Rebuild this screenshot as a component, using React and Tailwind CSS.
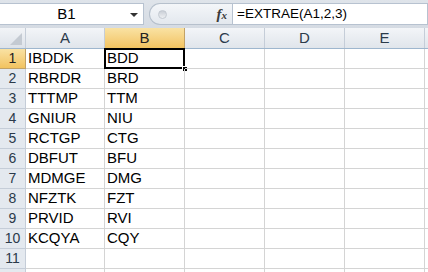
import React from 'react';

const rows = [
  ['IBDDK', 'BDD'],
  ['RBRDR', 'BRD'],
  ['TTTMP', 'TTM'],
  ['GNIUR', 'NIU'],
  ['RCTGP', 'CTG'],
  ['DBFUT', 'BFU'],
  ['MDMGE', 'DMG'],
  ['NFZTK', 'FZT'],
  ['PRVID', 'RVI'],
  ['KCQYA', 'CQY'],
  ['', ''],
  ['', ''],
];

const cols = ['A', 'B', 'C', 'D', 'E'];
const widths = ['w-[79px]', 'w-[80px]', 'w-[80px]', 'w-[80px]', 'w-[80px]'];

const App = () => {
  return (
    <div className="w-[428px] h-[272px] overflow-hidden bg-white font-['Liberation_Sans',Arial,sans-serif] text-[15px] text-black">
      {/* Formula bar */}
      <div className="h-[28px] bg-gradient-to-b from-[#dfe4ea] to-[#d5dbe3] pt-[3px] flex">
        <div className="w-[144px] h-[22px] bg-white border-y border-r border-[#b7c2d0] flex items-center relative">
          <span className="flex-1 text-center pr-[10px] text-[15px]">B1</span>
          <span className="absolute right-[5px] top-[9px] w-0 h-0 border-l-[4px] border-r-[4px] border-t-[4px] border-l-transparent border-r-transparent border-t-[#333]" />
        </div>
        <div className="ml-[5px] w-[83px] h-[22px] rounded-l-full border-y border-l border-[#b6c0cc] bg-gradient-to-b from-[#f4f6f9] to-[#e3e8ee] flex items-center">
          <span className="ml-[8px] w-[9px] h-[9px] rounded-full bg-gradient-to-b from-[#c9ced6] to-[#eef0f3] border border-[#c3c9d1]" />
          <span className="ml-auto mr-[5px] font-['Liberation_Serif',serif] italic font-bold text-[15px] text-[#3a3a3a] leading-none">
            f<span className="text-[11px]">x</span>
          </span>
        </div>
        <div className="flex-1 h-[22px] bg-white border border-[#b7c2d0] flex items-center pl-[4px] text-[13.5px]">
          =EXTRAE(A1,2,3)
        </div>
      </div>

      {/* Column headers */}
      <div className="flex h-[21px] border-b border-[#9eb6ce]">
        <div className="w-[26px] shrink-0 bg-gradient-to-b from-[#f2f4f7] to-[#dde2e9] border-r border-[#c5cdd8] relative">
          <span className="absolute right-[3px] bottom-[3px] w-0 h-0 border-b-[12px] border-l-[12px] border-b-[#c4cad2] border-l-transparent" />
        </div>
        {cols.map((c, i) => (
          <div
            key={c}
            className={`${widths[i]} shrink-0 border-r flex items-center justify-center text-[15px] ${
              c === 'B'
                ? 'bg-gradient-to-b from-[#f9e2a3] to-[#f2c35f] border-[#c2a266] text-[#222]'
                : 'bg-gradient-to-b from-[#f3f5f8] to-[#e0e5eb] border-[#c5cdd8] text-[#2b3a4a]'
            }`}
          >
            {c}
          </div>
        ))}
        <div className="flex-1 bg-gradient-to-b from-[#f3f5f8] to-[#e0e5eb]" />
      </div>

      {/* Grid */}
      {rows.map((r, ri) => (
        <div key={ri} className="flex h-[20px]">
          <div
            className={`w-[26px] shrink-0 border-r border-b flex items-center justify-center text-[14px] ${
              ri === 0
                ? 'bg-gradient-to-b from-[#f9e2a3] to-[#f2c35f] border-[#c2a266] text-[#222]'
                : 'bg-[#e4e9ef] border-[#c5cdd8] text-[#2b3a4a]'
            }`}
          >
            {ri < 11 ? ri + 1 : ''}
          </div>
          {cols.map((c, ci) => (
            <div
              key={c}
              className={`${widths[ci]} shrink-0 border-r border-b border-[#d4d4d4] flex items-center pl-[2px] relative`}
            >
              {ci < 2 ? r[ci] : ''}
              {ri === 0 && ci === 1 && (
                <>
                  <span className="absolute left-[-1px] top-[-1px] w-[81px] h-[21px] border-2 border-black" />
                  <span className="absolute right-[-4px] bottom-[-4px] w-[6px] h-[6px] bg-black border border-white" />
                </>
              )}
            </div>
          ))}
          <div className="flex-1 border-b border-[#d4d4d4]" />
        </div>
      ))}
    </div>
  );
};

export default App;
